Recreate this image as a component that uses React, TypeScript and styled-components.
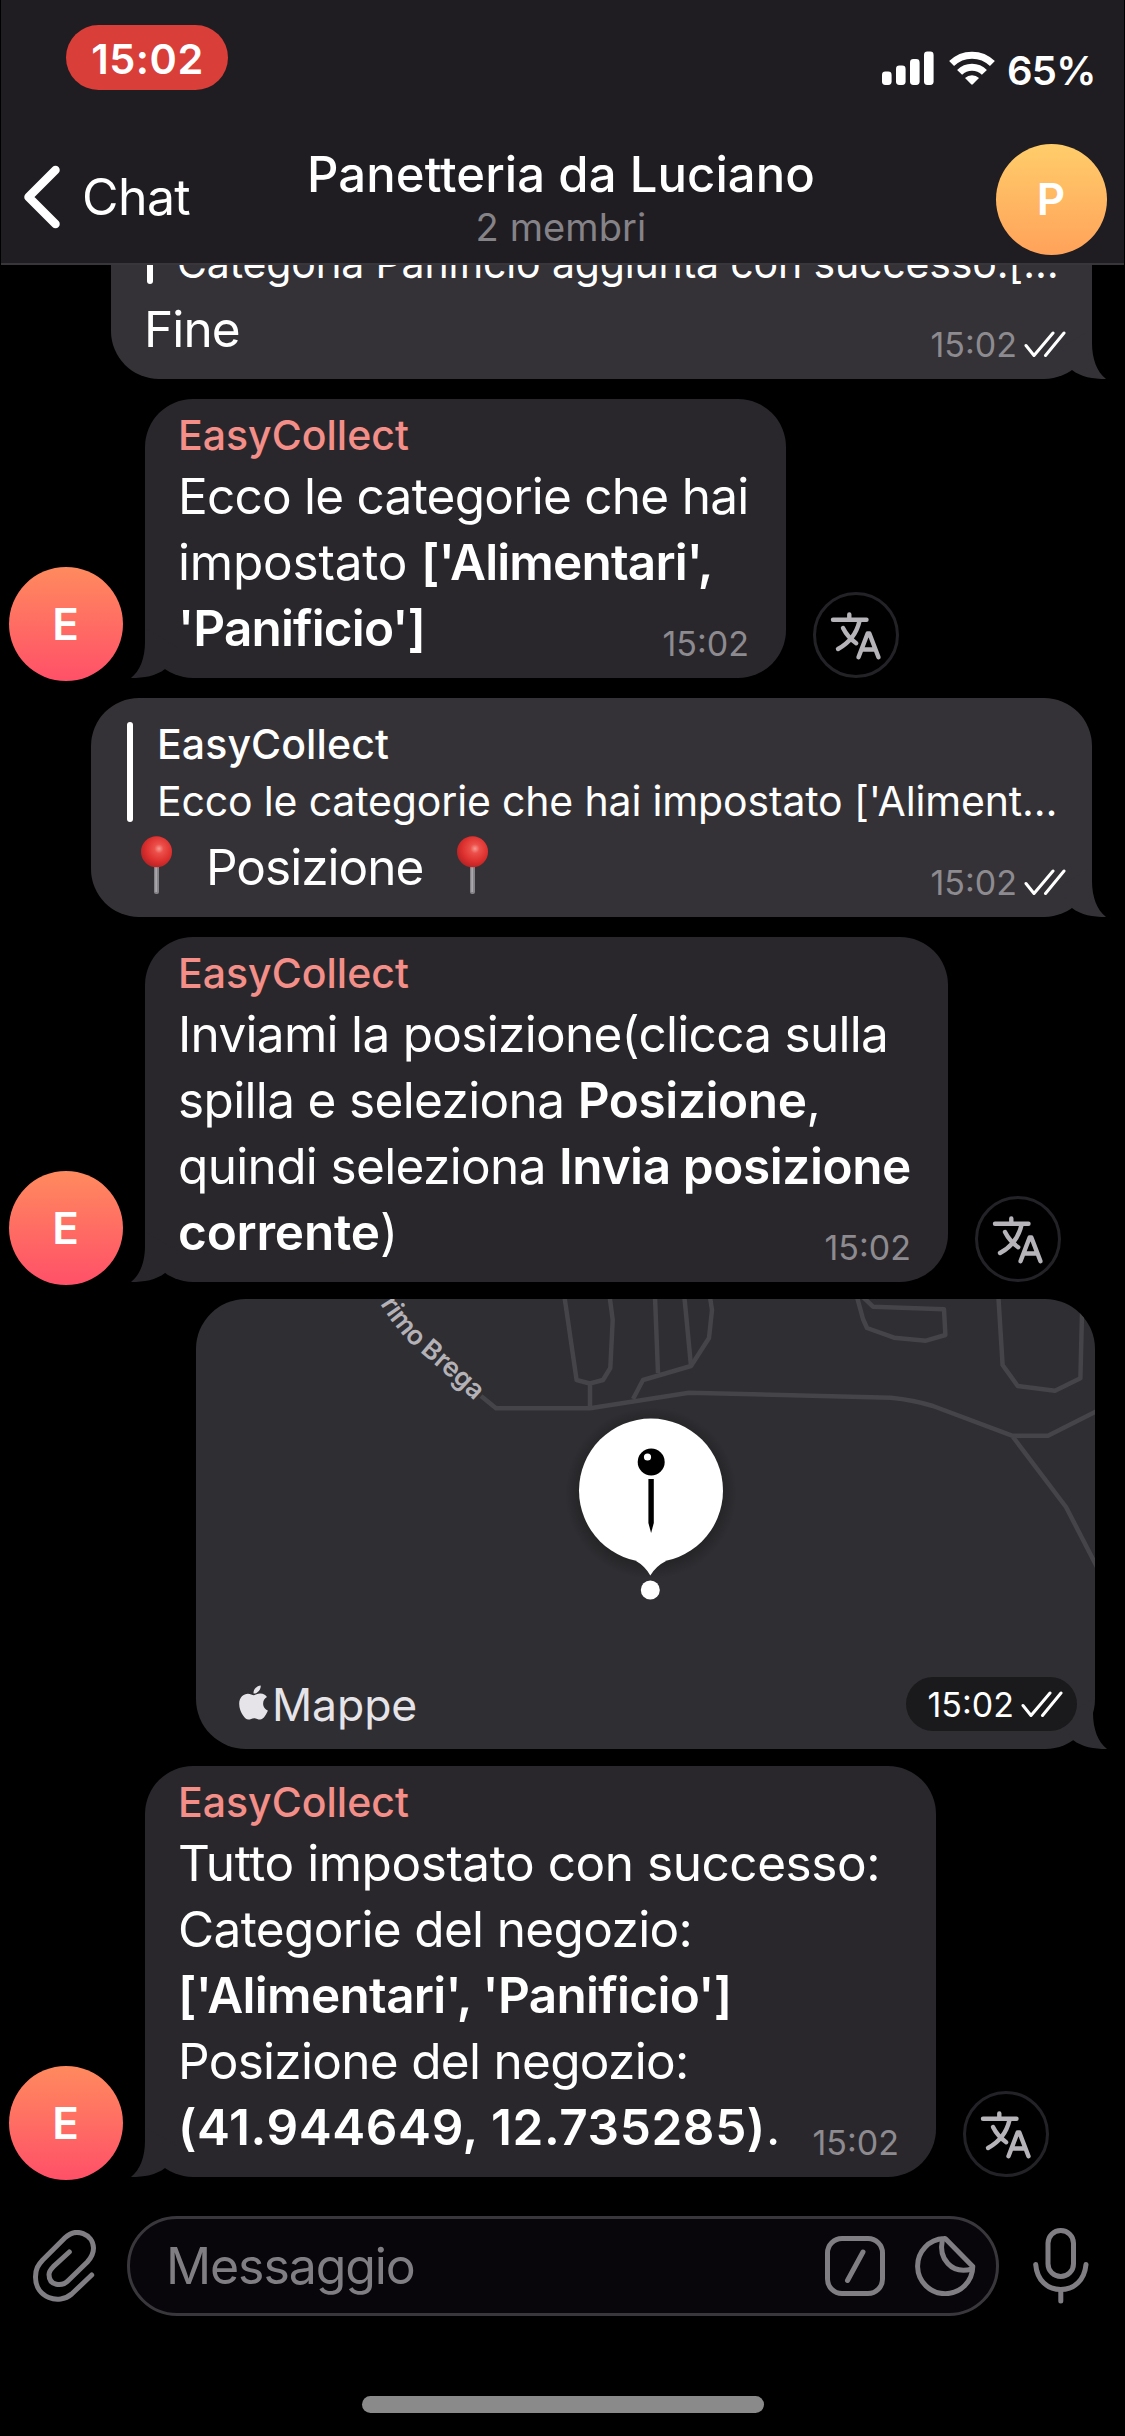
import React from "react";
import styled, { createGlobalStyle } from "styled-components";
import { FaApple } from "react-icons/fa";

const GlobalStyle = createGlobalStyle`
  html, body { margin: 0; padding: 0; background: #000; }
  *, *::before, *::after { box-sizing: border-box; }
  svg { display: block; flex: none; }
`;

const Screen = styled.div`
  width: 1125px;
  height: 2436px;
  display: flex;
  flex-direction: column;
  overflow: hidden;
  background: #000;
  color: #fff;
  font-family: Inter, "Liberation Sans", sans-serif;
`;

/* ---------- header ---------- */

const Header = styled.header`
  position: relative;
  z-index: 1;
  flex: none;
  height: 265px;
  margin: 0 1px;
  background: #1f1d21;
  border-bottom: 2px solid #38363a;
`;

const StatusBar = styled.div`
  height: 115px;
  display: flex;
  justify-content: space-between;
  align-items: flex-start;
  padding: 25px 31px 0 65px;
`;

const ClockPill = styled.div`
  width: 162px;
  height: 65px;
  border-radius: 33px;
  background: #d93e38;
  text-align: center;
  font-size: 41.5px;
  line-height: 68px;
  font-weight: 600;
  letter-spacing: 0.5px;
  padding-left: 1px;
`;

const Indicators = styled.div`
  display: flex;
  align-items: flex-start;
  padding-top: 26px;
`;

const Battery = styled.div`
  width: 86px;
  margin-left: 12px;
  font-size: 40px;
  line-height: 40px;
  font-weight: 600;
  letter-spacing: -0.8px;
  white-space: nowrap;
`;

const NavBar = styled.div`
  height: 148px;
  display: grid;
  grid-template-columns: 240px 1fr 240px;
  align-items: center;
  padding: 0 17px 0 21px;
`;

const Back = styled.div`
  display: flex;
  align-items: center;
  gap: 20px;
  font-size: 50px;
  line-height: 60px;
  padding-top: 16px;
  letter-spacing: -0.6px;
`;

const Heading = styled.div`
  text-align: center;
  white-space: nowrap;
  padding: 17px 7px 0 0;
`;

const Title = styled.div`
  font-size: 49px;
  line-height: 58px;
  font-weight: 500;
  letter-spacing: 0.08px;
`;

const Members = styled.div`
  font-size: 38px;
  line-height: 46px;
  color: #858388;
  letter-spacing: 0.1px;
`;

const Avatar = styled.div<{ $size: number; $from: string; $to: string }>`
  flex: none;
  width: ${(p) => p.$size}px;
  height: ${(p) => p.$size}px;
  border-radius: 50%;
  display: flex;
  align-items: center;
  justify-content: center;
  padding-right: 1px;
  background: linear-gradient(${(p) => p.$from}, ${(p) => p.$to});
  font-size: 44px;
  line-height: 44px;
  font-weight: 600;
`;

const AvatarSlot = styled.div`
  display: flex;
  justify-content: flex-end;
  padding-top: 20px;
`;

/* ---------- messages ---------- */

const Thread = styled.main`
  height: 1912px;
  flex: none;
  display: flex;
  flex-direction: column;
  justify-content: flex-end;
`;

const Row = styled.div<{ $out?: boolean; $gap?: number }>`
  flex: none;
  display: flex;
  align-items: flex-end;
  justify-content: ${(p) => (p.$out ? "flex-end" : "flex-start")};
  padding: ${(p) => (p.$out ? "0 33px 0 0" : "0 0 0 9px")};
  margin-top: ${(p) => p.$gap ?? 20}px;
`;

const SenderSlot = styled.div`
  margin: 0 22px -3px 0;
`;

const Bubble = styled.div<{ $out?: boolean; $width: number }>`
  position: relative;
  width: ${(p) => p.$width}px;
  border-radius: 48px;
  background: ${(p) => (p.$out ? "#343236" : "#29272c")};
  padding: ${(p) => (p.$out ? "16px 26px 17px 33px" : "12px 37px 17px 33px")};
`;

const TailSvg = styled.svg<{ $out?: boolean; $reach: number }>`
  position: absolute;
  bottom: 0;
  ${(p) => (p.$out ? `right: -${p.$reach}px;` : `left: -${p.$reach}px; transform: scaleX(-1);`)}
`;

const Sender = styled.div`
  height: 52px;
  font-size: 41px;
  line-height: 48px;
  font-weight: 500;
  color: #f38f88;
  letter-spacing: 0;
`;

const Line = styled.div<{ $track?: number; $strong?: number }>`
  height: 66px;
  display: flex;
  align-items: flex-end;
  justify-content: space-between;
  white-space: pre;
  font-size: 49.5px;
  line-height: 66px;
  letter-spacing: ${(p) => p.$track ?? -0.65}px;
  strong {
    font-weight: 600;
    letter-spacing: ${(p) => p.$strong ?? -0.4}px;
  }
`;

const Meta = styled.span<{ $light?: boolean }>`
  display: flex;
  align-items: flex-end;
  gap: 7px;
  font-size: 34px;
  line-height: 34px;
  letter-spacing: 0;
  color: ${(p) => (p.$light ? "#fff" : "#8d8b90")};
`;

const Quote = styled.div`
  display: flex;
  height: 114px;
  margin-bottom: 6px;
`;

const QuoteBar = styled.div`
  width: 6px;
  height: 100px;
  margin: 8px 24px 0 3px;
  border-radius: 3px;
  background: #fff;
`;

const QuoteText = styled.div`
  padding-top: 2px;
`;

const QuoteLine = styled.div<{ $name?: boolean }>`
  font-size: 41px;
  line-height: 57px;
  white-space: nowrap;
  font-weight: ${(p) => (p.$name ? 500 : 400)};
  letter-spacing: ${(p) => (p.$name ? 0.1 : -0.16)}px;
`;

const PinLine = styled.span`
  display: flex;
  align-items: flex-end;
  gap: 34px;
  padding-left: 17px;
`;

const PinSvg = styled.svg`
  margin-bottom: 6px;
`;

const TranslateButton = styled.div`
  width: 86px;
  height: 86px;
  margin-left: 27px;
  border-radius: 50%;
  border: 3px solid #232226;
`;

const MapBubble = styled.div`
  position: relative;
  width: 899px;
  height: 450px;
  margin-right: -3px;
  border-radius: 50px;
  background: #2f2e32;
`;

const MapCanvas = styled.svg`
  position: absolute;
  left: 0;
  top: 0;
  border-radius: 50px;
`;

const MapFooter = styled.div`
  position: relative;
  height: 100%;
  display: flex;
  justify-content: space-between;
  align-items: flex-end;
  padding: 0 18px 18px 38px;
`;

const Brand = styled.div`
  display: flex;
  align-items: center;
  color: #e6e4e8;
  font-size: 44.5px;
  line-height: 52px;
  letter-spacing: -0.1px;
  svg { margin: -5px -1px 0 0; }
`;

const MapTime = styled.div`
  width: 171px;
  height: 54px;
  border-radius: 27px;
  background: #1a191c;
  display: flex;
  justify-content: flex-end;
  align-items: flex-end;
  padding: 0 14px 9px 0;
`;

/* ---------- composer ---------- */

const Composer = styled.footer`
  flex: none;
  display: flex;
  align-items: center;
  padding: 39px 36px 0 33px;
`;

const Field = styled.div`
  width: 872px;
  height: 100px;
  margin: 0 auto 0 30px;
  border: 3px solid #39373b;
  border-radius: 50px;
  background: #08060a;
  display: flex;
  align-items: center;
  padding: 0 20px 0 36px;
  color: #807e83;
  font-size: 50px;
  letter-spacing: -1.1px;
`;

const Placeholder = styled.span`
  flex: 1;
`;

const FieldIcons = styled.div`
  display: flex;
  gap: 30px;
`;

const HomeIndicator = styled.div`
  flex: none;
  width: 402px;
  height: 17px;
  margin: 80px auto 0 362px;
  border-radius: 9px;
  background: #8a8a8a;
`;

/* ---------- drawings ---------- */

function Tail({ out, reach = 14, fill }: { out?: boolean; reach?: number; fill: string }) {
  return (
    <TailSvg $out={out} $reach={reach} width="48" height="50" viewBox="-34 -50 48 50">
      <path d="M0 -50 V-36 C0 -20 5 -7 14 0 C1 0 -11 -2 -20 -9 L-34 -30 Z" fill={fill} />
    </TailSvg>
  );
}

const ChecksSvg = styled.svg`
  margin-bottom: 4px;
`;

function Checks() {
  return (
    <ChecksSvg width="42" height="27" viewBox="0 0 42 27" fill="none" stroke="#fff" strokeWidth="3" strokeLinecap="round" strokeLinejoin="round">
      <path d="M2 14.5 L10 24.5 L29 2" />
      <path d="M21.5 24.5 L40 2" />
    </ChecksSvg>
  );
}

function RedPin() {
  return (
    <PinSvg width="31" height="58" viewBox="0 0 31 58">
      <defs>
        <radialGradient id="pinHead" cx="0.58" cy="0.4" r="0.6">
          <stop offset="0" stopColor="#f69a92" />
          <stop offset="0.25" stopColor="#ec4f49" />
          <stop offset="0.7" stopColor="#dc2f2e" />
          <stop offset="1" stopColor="#bb2426" />
        </radialGradient>
      </defs>
      <rect x="13" y="27" width="5" height="31" rx="2" fill="#858387" />
      <rect x="14.3" y="29" width="1.8" height="27" fill="#aaa8ac" />
      <circle cx="15.5" cy="15.8" r="15.5" fill="url(#pinHead)" />
    </PinSvg>
  );
}

function Translate() {
  return (
    <TranslateButton>
      <svg width="80" height="80" viewBox="3 3 80 80" fill="none" stroke="#b6b4b9" strokeWidth="4.4" strokeLinecap="round" strokeLinejoin="round">
        <path d="M20 27.7 H53.5 M36.3 22.5 V27.7" />
        <path d="M46.5 29 C43.5 42 36 51 25 57" />
        <path d="M30 36 C33 42 38 47.5 43.2 51.2" />
        <path d="M45.5 65.3 L54.6 41.5 H56.4 L65.5 65.3 M49 57.5 H62" />
      </svg>
    </TranslateButton>
  );
}

function Signal() {
  return (
    <svg width="52" height="34" viewBox="0 0 52 34" fill="#fff">
      <rect x="0" y="20.5" width="9.6" height="13.5" rx="3.4" />
      <rect x="14" y="14.5" width="9.6" height="19.5" rx="3.4" />
      <rect x="28" y="8" width="9.6" height="26" rx="3.4" />
      <rect x="42" y="0.5" width="9.6" height="33.5" rx="3.4" />
    </svg>
  );
}

const WifiSvg = styled.svg`
  margin-left: 15px;
`;

function Wifi() {
  return (
    <WifiSvg width="46" height="35" viewBox="0 0 46 35">
      <g fill="none" stroke="#fff" strokeWidth="7">
        <path d="M2.6 12.6 A29 29 0 0 1 43.4 12.6" />
        <path d="M10.6 21.4 A17.4 17.4 0 0 1 35.4 21.4" />
      </g>
      <path d="M16 27 A10.5 10.5 0 0 1 30 27 L23.8 33.3 Q23 34 22.2 33.3 Z" fill="#fff" />
    </WifiSvg>
  );
}

function MapDrawing() {
  return (
    <MapCanvas width="899" height="450" viewBox="0 0 899 450">
      <defs>
        <path id="viaPrimo" d="M171 -20 Q192 25 224 53 Q252 76 300 122" />
        <radialGradient id="glow">
          <stop offset="0.82" stopColor="#000" stopOpacity="0.22" />
          <stop offset="1" stopColor="#000" stopOpacity="0" />
        </radialGradient>
      </defs>
      <g fill="none" stroke="#454448" strokeWidth="4.5" strokeLinejoin="round">
        <path d="M285 97 L300 109.3 H394 Q440 102 493 93.7 L695 98.7 Q718 101 737 107 L816 136.7 H852 L901 112" />
        <path d="M817 138 L870 208 L901 268" />
        <path d="M368.5 -2 L380.6 81 L393.8 84.5 L407 81 L414.3 69 L416.7 21 L413.7 -2 M394 84.5 V109" />
        <path d="M459 -2 L462 74" />
        <path d="M488.4 -2 L495 67" />
        <path d="M514 -2 L516 11 L513 39 L495 67 L447 81 L437 100" />
        <path d="M661 -2 L667 20 L671 29 L698 38.7 L730 41.7 L749.4 36 L748 10.3 L677 7.7 L667 -2" />
        <path d="M802.4 -2 L806.6 66 L821.7 87 L859 91.7 L884.4 79.3 L886 14 V-2" />
      </g>
      <text fontFamily="Inter, sans-serif" fontSize="26.5" fontWeight="600" fill="#b4b2b7" letterSpacing="-0.3">
        <textPath href="#viaPrimo" startOffset="11">Primo Brega</textPath>
      </text>
      <circle cx="455" cy="194" r="86" fill="url(#glow)" />
      <path d="M440 262 Q449 267 454.3 276.5 Q460 267 470 262 Z" fill="#fff" />
      <circle cx="455" cy="191.5" r="72" fill="#fff" />
      <circle cx="454.3" cy="291" r="9.5" fill="#fff" />
      <circle cx="455.2" cy="163" r="13.5" fill="#000" />
      <circle cx="451.5" cy="158" r="3.6" fill="#fff" />
      <path d="M452.4 180 H457.8 V224 L455.1 234 L452.4 224 Z" fill="#000" />
    </MapCanvas>
  );
}

/* ---------- parts ---------- */

type TextLine = { text: React.ReactNode; track?: number; strong?: number };

function Incoming({ width, gap, lines }: { width: number; gap?: number; lines: TextLine[] }) {
  return (
    <Row $gap={gap}>
      <SenderSlot>
        <Avatar $size={114} $from="#ff8a5e" $to="#ff5068">E</Avatar>
      </SenderSlot>
      <Bubble $width={width}>
        <Tail fill="#29272c" />
        <Sender>EasyCollect</Sender>
        {lines.map((line, i) => (
          <Line key={i} $track={line.track} $strong={line.strong}>
            <span>{line.text}</span>
            {i === lines.length - 1 && <Meta>15:02</Meta>}
          </Line>
        ))}
      </Bubble>
      <Translate />
    </Row>
  );
}

function Outgoing({ width, quote, track, children }: { width: number; quote: string; track?: number; children: React.ReactNode }) {
  return (
    <Row $out>
      <Bubble $out $width={width}>
        <Tail out fill="#343236" />
        <Quote>
          <QuoteBar />
          <QuoteText>
            <QuoteLine $name>EasyCollect</QuoteLine>
            <QuoteLine>{quote}</QuoteLine>
          </QuoteText>
        </Quote>
        <Line $track={track}>
          <span>{children}</span>
          <Meta>15:02<Checks /></Meta>
        </Line>
      </Bubble>
    </Row>
  );
}

export default function App() {
  return (
    <Screen>
      <GlobalStyle />
      <Header>
        <StatusBar>
          <ClockPill>15:02</ClockPill>
          <Indicators>
            <Signal />
            <Wifi />
            <Battery>65%</Battery>
          </Indicators>
        </StatusBar>
        <NavBar>
          <Back>
            <svg width="40" height="66" viewBox="0 0 40 66" fill="none" stroke="#fff" strokeWidth="8.5" strokeLinecap="round" strokeLinejoin="round">
              <path d="M33.5 6 L6.5 33 L33.5 60" />
            </svg>
            Chat
          </Back>
          <Heading>
            <Title>Panetteria da Luciano</Title>
            <Members>2 membri</Members>
          </Heading>
          <AvatarSlot>
            <Avatar $size={111} $from="#ffcd6a" $to="#ffa25a">P</Avatar>
          </AvatarSlot>
        </NavBar>
      </Header>

      <Thread>
        <Outgoing width={981} track={-0.9} quote="Categoria Panificio aggiunta con successo.[…">Fine</Outgoing>
        <Incoming
          width={641}
          lines={[
            { text: "Ecco le categorie che hai", track: -0.76 },
            { text: <>impostato <strong>['Alimentari',</strong></>, track: -0.2, strong: -0.85 },
            { text: <strong>'Panificio']</strong>, strong: -0.85 },
          ]}
        />
        <Outgoing width={1001} track={-1} quote="Ecco le categorie che hai impostato ['Aliment…">
          <PinLine>
            <RedPin />
            Posizione
            <RedPin />
          </PinLine>
        </Outgoing>
        <Incoming
          width={803}
          lines={[
            { text: "Inviami la posizione(clicca sulla", track: -0.7 },
            { text: <>spilla e seleziona <strong>Posizione</strong>,</>, track: -0.65 },
            { text: <>quindi seleziona <strong>Invia posizione</strong></> },
            { text: <><strong>corrente</strong>)</>, strong: -0.2 },
          ]}
        />
        <Row $out $gap={17}>
          <MapBubble>
            <Tail out reach={12} fill="#2f2e32" />
            <MapDrawing />
            <MapFooter>
              <Brand>
                <FaApple size={39} />
                Mappe
              </Brand>
              <MapTime>
                <Meta $light>15:02<Checks /></Meta>
              </MapTime>
            </MapFooter>
          </MapBubble>
        </Row>
        <Incoming
          width={791}
          gap={17}
          lines={[
            { text: "Tutto impostato con successo:", track: -0.45 },
            { text: "Categorie del negozio:" },
            { text: <strong>['Alimentari', 'Panificio']</strong>, strong: -0.7 },
            { text: "Posizione del negozio:", track: -0.7 },
            { text: <><strong>(41.944649, 12.735285)</strong>.</>, strong: 0.6 },
          ]}
        />
      </Thread>

      <Composer>
        <svg width="64" height="73" viewBox="0 0 64 73" fill="none" stroke="#807e83" strokeWidth="5" strokeLinecap="round" strokeLinejoin="round">
          <path d="M58.7 45 L38.7 64 C26 75 2.5 68 2.5 47 C2.5 39 5 35 9.7 30 L32 7.8 C43 -3 60 4 60.5 18 C60.5 24 58.5 27.5 54.3 32 L35.3 50.5 C29 57 16 56 16 44.5 C16 41.5 17.5 39.5 20.3 36.7 L36.3 22" />
        </svg>
        <Field>
          <Placeholder>Messaggio</Placeholder>
          <FieldIcons>
            <svg width="60" height="60" viewBox="0 0 60 60" fill="none" stroke="#807e83" strokeWidth="5" strokeLinecap="round">
              <rect x="2.5" y="2.5" width="55" height="55" rx="14.5" />
              <path d="M38 16 L22.5 44.5" />
            </svg>
            <svg width="61" height="60" viewBox="0 0 61 60" fill="none" stroke="#807e83" strokeWidth="5" strokeLinecap="round" strokeLinejoin="round">
              <path d="M29 2.5 A27.6 27.6 0 1 0 57.8 30.5 L31 3.2 Q30 2.4 29 2.5 Z" />
              <path d="M27.3 4.5 C23.5 22 36 39 57 33" />
            </svg>
          </FieldIcons>
        </Field>
        <svg width="56" height="76" viewBox="0 0 56 76" fill="none" stroke="#807e83" strokeWidth="5" strokeLinecap="round">
          <rect x="15" y="2.5" width="25.5" height="46" rx="12.75" />
          <path d="M2.7 36.5 C4 52 14 61.5 27.8 61.5 C41.5 61.5 51.5 52 53 36.5" />
          <path d="M27.8 62 V73" />
        </svg>
      </Composer>
      <HomeIndicator />
    </Screen>
  );
}
